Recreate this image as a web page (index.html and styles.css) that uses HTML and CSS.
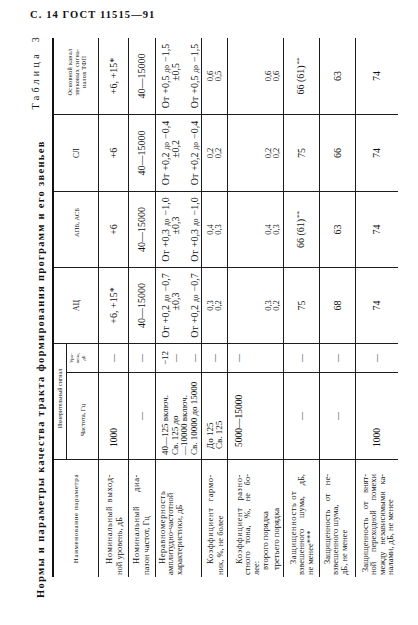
FILE: index.html
```html
<!DOCTYPE html>
<html lang="ru">
<head>
<meta charset="utf-8">
<title>ГОСТ 11515—91, с. 14</title>
<link rel="stylesheet" href="styles.css">
</head>
<body>
<div class="running">С. 14 ГОСТ 11515—91</div>
<div class="sheet">
  <div class="rot">
    <div class="caption">
      <div class="title">Нормы и параметры качества тракта формирования программ и его звеньев</div>
      <div class="tabno">Таблица 3</div>
    </div>
    <div class="tbl">
      <!-- header -->
      <div class="c first hd hname">Наименование параметра</div>
      <div class="c hd hmeas">Измерительный сигнал</div>
      <div class="c hd hsp hac">АЦ</div>
      <div class="c hd hsp hapb">АПБ, АСБ</div>
      <div class="c hd hsp hsl">СЛ</div>
      <div class="c hd hsp htfp"><div>Основной канал</div><div>звуковых сигна-</div><div>налов ТФП</div></div>
      <div class="c hfreq">Частота, Гц</div>
      <div class="c hlev"><div>Уро-</div><div>вень,</div><div>дБ</div></div>

      <!-- R1 -->
      <div class="c first nm p6"><div class="ln j ind ls">Номинальный выход-</div><div class="ln">ной уровень, дБ</div></div>
      <div class="c fq"><div>1000</div></div>
      <div class="c v"><span class="dash">—</span></div>
      <div class="c v">+6, +15*</div>
      <div class="c v">+6</div>
      <div class="c v">+6</div>
      <div class="c v">+6, +15*</div>

      <!-- R2 -->
      <div class="c first nm p3"><div class="ln j ind ls">Номинальный диа-</div><div class="ln">пазон частот, Гц</div></div>
      <div class="c v"><span class="dash">—</span></div>
      <div class="c v"><span class="dash">—</span></div>
      <div class="c v">40—15000</div>
      <div class="c v">40—15000</div>
      <div class="c v">40—15000</div>
      <div class="c v">40—15000</div>

      <!-- R3 -->
      <div class="c first nm p2 tight"><div class="ln ind ls">Неравномерность</div><div class="ln j">амплитудно-частотной</div><div class="ln">характеристики, дБ</div></div>
      <div class="c fq r3"><div>40—125 включ.</div><div>Св. 125 до</div><div>—10000 включ.</div><div>Св. 10000 до 15000</div></div>
      <div class="c lv r3"><div>−12</div><div><span class="dash">—</span></div><div></div><div><span class="dash">—</span></div></div>
      <div class="c vr r3"><div>От +0,2 <span class="sm">до</span> −0,7</div><div class="pm">±0,3</div><div></div><div>От +0,2 <span class="sm">до</span> −0,7</div></div>
      <div class="c vr r3"><div>От +0,3 <span class="sm">до</span> −1,0</div><div class="pm">±0,3</div><div></div><div>От +0,3 <span class="sm">до</span> −1,0</div></div>
      <div class="c vr r3"><div>От +0,2 <span class="sm">до</span> −0,4</div><div class="pm">±0,2</div><div></div><div>От +0,2 <span class="sm">до</span> −0,4</div></div>
      <div class="c vr r3"><div>От +0,5 <span class="sm">до</span> −1,5</div><div class="pm">±0,5</div><div></div><div>От +0,5 <span class="sm">до</span> −1,5</div></div>

      <!-- R4 -->
      <div class="c first nm p4"><div class="ln j ind ls">Коэффициент гармо-</div><div class="ln">ник, %, не более</div></div>
      <div class="c fq pair"><div>До 125</div><div>Св. 125</div></div>
      <div class="c v"><span class="dash">—</span></div>
      <div class="c v pair"><div>0,3</div><div>0,2</div></div>
      <div class="c v pair"><div>0,4</div><div>0,3</div></div>
      <div class="c v pair"><div>0,2</div><div>0,2</div></div>
      <div class="c v pair"><div>0,6</div><div>0,5</div></div>

      <!-- R5 -->
      <div class="c first nm p7 tight"><div class="ln j ind ls">Коэффициент разно-</div><div class="ln j">стного тона, %, не бо-</div><div class="ln">лее:</div><div class="ln sub">второго порядка</div><div class="ln sub">третьего порядка</div></div>
      <div class="c fq top"><div>5000—15000</div></div>
      <div class="c v top"><span class="dash">—</span></div>
      <div class="c v pair low"><div>0,3</div><div>0,2</div></div>
      <div class="c v pair low"><div>0,4</div><div>0,3</div></div>
      <div class="c v pair low"><div>0,2</div><div>0,2</div></div>
      <div class="c v pair low"><div>0,6</div><div>0,6</div></div>

      <!-- R6 -->
      <div class="c first nm p5 tight"><div class="ln ind ls">Защищенность от</div><div class="ln j">взвешенного шума, дБ,</div><div class="ln">не менее***</div></div>
      <div class="c v"><span class="dash">—</span></div>
      <div class="c v"><span class="dash">—</span></div>
      <div class="c v">75</div>
      <div class="c v"><div>66 (61)<span class="star">**</span></div></div>
      <div class="c v">75</div>
      <div class="c v"><div>66 (61)<span class="star">**</span></div></div>

      <!-- R7 -->
      <div class="c first nm p3 tight"><div class="ln j ind">Защищенность от не-</div><div class="ln">взвешенного шума,</div><div class="ln">дБ, не менее</div></div>
      <div class="c v"><span class="dash">—</span></div>
      <div class="c v"><span class="dash">—</span></div>
      <div class="c v">68</div>
      <div class="c v">63</div>
      <div class="c v">66</div>
      <div class="c v">63</div>

      <!-- R8 -->
      <div class="c first nm p5 tight"><div class="ln j ind2">Защищенность от внят-</div><div class="ln j">ной переходной помехи</div><div class="ln j">между независимыми ка-</div><div class="ln">налами, дБ, не менее</div></div>
      <div class="c fq"><div>1000</div></div>
      <div class="c v"><span class="dash">—</span></div>
      <div class="c v">74</div>
      <div class="c v">74</div>
      <div class="c v">74</div>
      <div class="c v">74</div>
    </div>
  </div>
</div>
</body>
</html>
```

FILE: styles.css
```css
* {
  box-sizing: border-box;
  margin: 0;
  padding: 0;
}

html,
body {
  background: #ffffff;
}

body {
  width: 418px;
  height: 625px;
  overflow: hidden;
  font-family: "Liberation Serif", "DejaVu Serif", serif;
  color: #111111;
}

.running {
  height: 30px;
  padding: 9px 0 0 30px;
  font-size: 10.5px;
  line-height: 11px;
  font-weight: bold;
  letter-spacing: 1.1px;
}

.sheet {
  width: 390px;
  height: 575px;
  margin-left: 20px;
}

.rot {
  width: 575px;
  height: 390px;
  transform-origin: 0 0;
  transform: rotate(-90deg) translateX(-100%);
}

.caption {
  display: flex;
  align-items: flex-start;
  height: 32px;
}

.title {
  margin: 15px 0 0 7px;
  font-size: 10.5px;
  line-height: 12px;
  font-weight: bold;
  letter-spacing: 1.3px;
  white-space: nowrap;
}

.tabno {
  margin: 10px 4px 0 auto;
  font-size: 10px;
  line-height: 12px;
  letter-spacing: 3.3px;
  word-spacing: 3px;
  white-space: nowrap;
}

.tbl {
  display: grid;
  width: 539px;
  margin-left: 28px;
  grid-template-columns: 117px 87px 29px 76px 76px 77px 77px;
  grid-template-rows: 12px 32px 30px 27px 46px 26px 56px 36px 36px 43px;
  border-top: 2px solid #111;
}

.c {
  border-top: 1px solid #1c1c1c;
  border-left: 1px solid #1c1c1c;
  overflow: hidden;
}

.c.first {
  border-left: none;
}

.c.hd {
  border-top: none;
}

.hsp {
  grid-row: span 2;
}

.hname {
  grid-row: span 2;
  display: flex;
  align-items: center;
  justify-content: center;
  font-size: 7px;
  letter-spacing: 0.6px;
}

.hmeas {
  grid-column: span 2;
  display: flex;
  align-items: center;
  justify-content: center;
  font-size: 6px;
  line-height: 7px;
  white-space: nowrap;
  padding-left: 6px;
}

.hfreq {
  display: flex;
  align-items: center;
  justify-content: center;
  font-size: 6.5px;
  padding-right: 8px;
}

.hlev {
  display: flex;
  flex-direction: column;
  align-items: center;
  padding-top: 2px;
  font-size: 5px;
  line-height: 6px;
}

.hac,
.hapb,
.hsl,
.htfp {
  display: flex;
  flex-direction: column;
  align-items: center;
  justify-content: center;
  white-space: nowrap;
}

.hac {
  font-size: 8px;
}

.hapb {
  font-size: 6.5px;
  padding-left: 14px;
}

.hsl {
  font-size: 7.5px;
}

.htfp {
  font-size: 6.2px;
  line-height: 7px;
  letter-spacing: 0.3px;
  padding-left: 8px;
}

.nm {
  padding: 3px 14px 0 2px;
  font-size: 8.5px;
  line-height: 9.5px;
}

.nm.tight {
  line-height: 8.3px;
}

.p2 { padding-top: 2px; }
.p3 { padding-top: 3px; }
.p4 { padding-top: 4px; }
.p5 { padding-top: 5px; }
.p6 { padding-top: 6px; }
.p7 { padding-top: 7px; }

.ln {
  white-space: nowrap;
  text-align: left;
}

.ln.j {
  white-space: normal;
  text-align: justify;
  text-align-last: justify;
}

.ln.ls {
  letter-spacing: 0.6px;
}

.ln.ind {
  padding-left: 11px;
}

.ln.ind2 {
  padding-left: 3px;
}

.ln.sub {
  padding-left: 5px;
  line-height: 11px;
}

.ln.sub + .ln.sub {
  line-height: 10px;
}

.v {
  display: flex;
  flex-direction: column;
  align-items: center;
  justify-content: center;
  font-size: 10px;
  line-height: 10px;
  white-space: nowrap;
}

.star {
  font-size: 7px;
  position: relative;
  top: -3px;
  margin-left: 1px;
}

.dash {
  font-size: 8px;
}

.fq {
  display: flex;
  flex-direction: column;
  justify-content: center;
  padding-left: 12px;
  font-size: 9.5px;
  line-height: 10px;
  white-space: nowrap;
}

.fq.r3 {
  justify-content: flex-start;
  padding: 5px 0 0 4px;
  font-size: 9px;
  line-height: 9.5px;
}

.fq.pair {
  padding-left: 10px;
  font-size: 9px;
  line-height: 8.5px;
}

.lv.r3 {
  display: flex;
  flex-direction: column;
  align-items: center;
  padding-top: 5px;
  font-size: 9px;
  line-height: 9.5px;
}

.lv.r3 > div,
.fq.r3 > div,
.vr.r3 > div {
  height: 9.5px;
}

.vr.r3 {
  display: flex;
  flex-direction: column;
  align-items: center;
  padding-top: 5px;
  font-size: 10px;
  line-height: 9.5px;
  white-space: nowrap;
  word-spacing: 0.5px;
}

.vr .pm {
  padding-left: 8px;
}

.sm {
  font-size: 7.5px;
}

.v.pair {
  font-size: 8.5px;
  line-height: 7.5px;
}

.v.pair.low {
  justify-content: flex-start;
  padding-top: 36px;
  line-height: 8px;
}

.v.top,
.fq.top {
  justify-content: flex-start;
  padding-top: 6px;
}
```
